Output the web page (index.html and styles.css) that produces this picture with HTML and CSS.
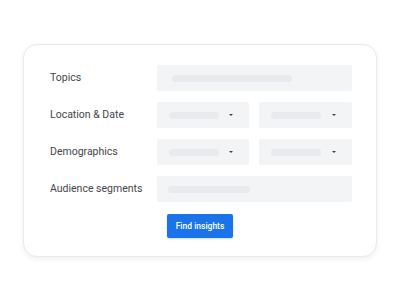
FILE: index.html
```html
<html lang="en">
<head>
    <meta charset="UTF-8">
    <meta name="viewport" content="width=device-width, initial-scale=1.0">
    <title>Find insights</title>
    <link rel="stylesheet" href="styles.css">
</head>
<body>
    <div class="card">
        <div class="form">
            <div class="label">Topics</div>
            <div class="field wide"><span class="bar bar-topics"></span></div>

            <div class="label">Location &amp; Date</div>
            <div class="pair">
                <div class="field select"><span class="bar"></span><span class="caret"></span></div>
                <div class="field select"><span class="bar"></span><span class="caret"></span></div>
            </div>

            <div class="label">Demographics</div>
            <div class="pair">
                <div class="field select"><span class="bar"></span><span class="caret"></span></div>
                <div class="field select"><span class="bar"></span><span class="caret"></span></div>
            </div>

            <div class="label">Audience segments</div>
            <div class="field wide"><span class="bar bar-audience"></span></div>
        </div>
        <div class="actions">
            <button class="primary">Find insights</button>
        </div>
    </div>
</body>
</html>
```

FILE: styles.css
```css
body {
    margin: 0;
    background-color: #ffffff;
    font-family: 'Roboto', 'Liberation Sans', sans-serif;
    color: #3c4043;
}

.card {
    box-sizing: border-box;
    width: 354px;
    height: 213px;
    margin: 44px 0 0 23px;
    padding: 20px 25px 20px 26px;
    background-color: #ffffff;
    border: 1px solid #e8eaed;
    border-radius: 14px;
    box-shadow: 0 2px 5px rgba(60, 64, 67, 0.08);
}

.form {
    display: grid;
    grid-template-columns: 107px 195px;
    grid-auto-rows: 26px;
    row-gap: 11px;
    align-items: center;
}

.label {
    font-size: 10.5px;
    line-height: 26px;
    white-space: nowrap;
    color: #444649;
}

.pair {
    display: grid;
    grid-template-columns: 92px 93px;
    column-gap: 10px;
    height: 26px;
}

.field {
    height: 26px;
    background-color: #f3f4f5;
    border-radius: 2px;
    display: flex;
    align-items: center;
    box-sizing: border-box;
}

.field.wide {
    padding-left: 15px;
}

.field.select {
    padding: 0 16px 0 12px;
    justify-content: space-between;
}

.bar {
    display: block;
    height: 7px;
    width: 50px;
    border-radius: 4px;
    background-color: #e8eaed;
}

.bar-topics {
    width: 120px;
}

.bar-audience {
    width: 82px;
    margin-left: -4px;
}

.caret {
    width: 0;
    height: 0;
    border-left: 2.5px solid transparent;
    border-right: 2.5px solid transparent;
    border-top: 2.5px solid #3c4043;
}

.actions {
    display: flex;
    justify-content: center;
    margin-top: 12px;
    margin-left: -1px;
}

button.primary {
    width: 66px;
    height: 24px;
    padding: 0;
    border: none;
    border-radius: 2px;
    background-color: #1a73e8;
    color: #ffffff;
    font-family: 'Roboto', 'Liberation Sans', sans-serif;
    font-size: 8.5px;
    font-weight: 500;
    box-shadow: 0 1px 2px rgba(26, 115, 232, 0.25);
}
```
